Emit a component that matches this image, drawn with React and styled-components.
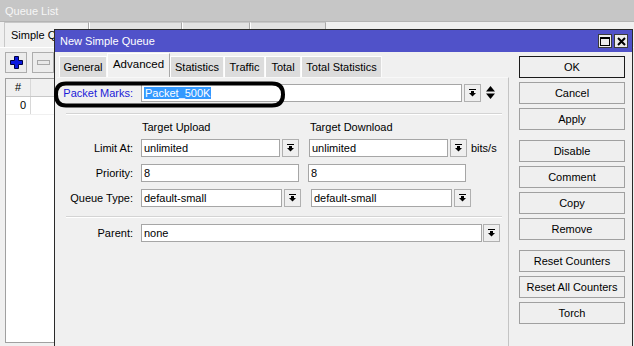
import React from 'react';
import styled, { createGlobalStyle } from 'styled-components';

const Global = createGlobalStyle`
  html, body {
    margin: 0;
    padding: 0;
    background: #f0f0f0;
    overflow: hidden;
  }
  body {
    font-family: "Liberation Sans", Arial, sans-serif;
    font-size: 11px;
    color: #000;
  }
`;

const Desktop = styled.div`
  position: relative;
  width: 634px;
  height: 346px;
  overflow: hidden;
  background: #f0f0f0;
`;

/* ---------- Queue List (window behind) ---------- */

const QueueWindow = styled.div`
  display: flex;
  flex-direction: column;
  height: 346px;
`;

const QLTitle = styled.div`
  height: 22px;
  line-height: 23px;
  padding-left: 5px;
  background: #c6c6c6;
  color: #f6f6f6;
  border-bottom: 1px solid #b4b4b4;
  box-sizing: border-box;
`;

const QLTabs = styled.div`
  display: flex;
  height: 25px;
  padding-left: 4px;
  border-bottom: 1px solid #fff;
`;

const QLTab = styled.div`
  width: ${p => p.$w}px;
  box-sizing: border-box;
  padding: 6px 0 0 6px;
  border-top: 1px solid #c8c8c8;
  border-left: 1px solid ${p => (p.$active ? '#c8c8c8' : '#fff')};
  border-right: 1px solid #a8a8a8;
  background: ${p => (p.$active ? '#f0f0f0' : '#e2e2e2')};
`;

/* only the part left of the dialog is visible */
const QLTabText = styled.div`
  width: 43px;
  white-space: nowrap;
  overflow: hidden;
`;

const QLToolbar = styled.div`
  display: flex;
  gap: 5px;
  padding: 4px 0 0 5px;
  height: 30px;
  box-sizing: border-box;
`;

const ToolBtn = styled.div`
  width: 22px;
  height: 21px;
  box-sizing: border-box;
  border: 1px solid #adadad;
  background: #ececec;
  display: flex;
  align-items: center;
  justify-content: center;
`;

const QLTable = styled.div`
  flex: 1;
  margin: 0 0 3px 5px;
  width: 60px;
  background: #fff;
  border: 1px solid #a0a0a0;
  border-right: none;
`;

const TRow = styled.div`
  display: flex;
  height: 17px;
  border-bottom: 1px solid ${p => (p.$head ? '#c8c8c8' : '#f0f0f0')};
  background: ${p => (p.$head ? '#f0f0f0' : '#fff')};
`;

const TCell = styled.div`
  width: ${p => p.$w}px;
  box-sizing: border-box;
  line-height: 17px;
  text-align: ${p => p.$align || 'left'};
  padding: 0 4px;
  border-right: 1px solid #d8d8d8;
`;

/* ---------- Dialog ---------- */

const Dialog = styled.div`
  position: absolute;
  left: 54px;
  top: 29px;
  width: 579px;
  height: 330px;
  box-sizing: border-box;
  border: 1px solid #2a2a2a;
  background: #f0f0f0;
  display: flex;
  flex-direction: column;
`;

const TitleBar = styled.div`
  height: 22px;
  display: flex;
  align-items: center;
  justify-content: space-between;
  padding: 0 4px 0 5px;
  background: #5052c9;
  color: #fff;
`;

const WinBtns = styled.div`
  display: flex;
  gap: 2px;
`;

const WinBtn = styled.div`
  width: 14px;
  height: 14px;
  box-sizing: border-box;
  border: 1px solid #3a3a3a;
  background: #ececec;
  display: flex;
  align-items: center;
  justify-content: center;
`;

const DlgBody = styled.div`
  flex: 1;
  display: flex;
`;

const TabArea = styled.div`
  display: flex;
  flex-direction: column;
  margin-left: 2px;
  width: 452px;
`;

const TabStrip = styled.div`
  display: flex;
  align-items: flex-end;
  height: 25px;
  padding-left: 2px;
`;

const Tab = styled.div`
  width: ${p => p.$w}px;
  height: ${p => (p.$active ? 24 : 21)}px;
  box-sizing: border-box;
  display: flex;
  align-items: center;
  justify-content: center;
  white-space: nowrap;
  background: ${p => (p.$active ? '#f0f0f0' : '#dcdcdc')};
  border-top: 1px solid #fff;
  border-left: 1px solid #fff;
  border-right: 1px solid ${p => (p.$active ? '#a8a8a8' : '#fafafa')};
  font-size: ${p => (p.$active ? 11.5 : 11)}px;
  padding-bottom: ${p => (p.$active ? 3 : 0)}px;
`;

const Panel = styled.div`
  flex: 1;
  border-right: 1px solid #c4c4c4;
  border-top: 1px solid #f8f8f8;
  padding-top: 6px;
`;

const Row = styled.div`
  display: flex;
  align-items: center;
  height: 18px;
  margin-top: ${p => p.$mt || 0}px;
`;

const Label = styled.div`
  width: 76px;
  margin-right: 8px;
  text-align: right;
  white-space: nowrap;
  color: ${p => (p.$blue ? '#1b1bd8' : '#000')};
`;

const Field = styled.div`
  width: ${p => p.$w}px;
  height: 18px;
  box-sizing: border-box;
  border: 1px solid #a6a6a6;
  background: #fff;
  padding-left: 2px;
  line-height: 16px;
  margin-left: ${p => p.$ml || 0}px;
  white-space: nowrap;
  overflow: hidden;
`;

const Selected = styled.span`
  background: #3399ff;
  color: #fff;
  padding: 0 1px;
`;

const DropBtn = styled.div`
  width: 17px;
  height: 18px;
  box-sizing: border-box;
  border: 1px solid #b0b0b0;
  background: #efefef;
  margin-left: ${p => (p.$ml === undefined ? 2 : p.$ml)}px;
  display: flex;
  align-items: center;
  justify-content: center;
`;

const Unit = styled.span`
  margin-left: 4px;
`;

const Separator = styled.div`
  margin: ${p => p.$mt}px 6px 0 9px;
  border-top: 1px solid #d4d4d4;
  border-bottom: 1px solid #fff;
`;

const HeadRow = styled.div`
  display: flex;
  height: 14px;
  margin-top: 5px;
  line-height: 14px;
  padding-left: 85px;
`;

const HeadCell = styled.div`
  width: ${p => p.$w}px;
`;

const ButtonCol = styled.div`
  display: flex;
  flex-direction: column;
  margin: 4px 0 0 10px;
  width: 106px;
`;

const Button = styled.div`
  height: 22px;
  box-sizing: border-box;
  margin-top: ${p => p.$mt}px;
  border: 1px solid ${p => (p.$default ? '#1a1a1a' : '#a0a0a0')};
  background: #efefef;
  display: flex;
  align-items: center;
  justify-content: center;
  white-space: nowrap;
`;

const Annotation = styled.svg`
  position: absolute;
  left: 0;
  top: 0;
  pointer-events: none;
`;

/* ---------- icons ---------- */

const DropIcon = () => (
  <svg width="7" height="8" viewBox="0 0 7 8">
    <rect x="0" y="0" width="7" height="1" fill="#000" />
    <rect x="2" y="2" width="3" height="2" fill="#000" />
    <polygon points="0,4 7,4 3.5,7.6" fill="#000" />
  </svg>
);

const UpDownIcon = () => (
  <svg width="9" height="14" viewBox="0 0 9 14" style={{ marginLeft: 5 }}>
    <polygon points="4.5,0 9,5.5 0,5.5" fill="#000" />
    <polygon points="0,7.5 9,7.5 4.5,13" fill="#000" />
  </svg>
);

const PlusIcon = () => (
  <svg width="13" height="13" viewBox="0 0 13 13">
    <path d="M4.5 0.5h4v4h4v4h-4v4h-4v-4h-4v-4h4z" fill="#0a18e0" stroke="#000040" strokeWidth="1" />
  </svg>
);

const MinusIcon = () => (
  <svg width="13" height="5" viewBox="0 0 13 5">
    <rect x="0.5" y="0.5" width="12" height="4" fill="#e8e8e8" stroke="#a8a8a8" />
  </svg>
);

const MaxIcon = () => (
  <svg width="10" height="9" viewBox="0 0 10 9">
    <rect x="0.5" y="0.5" width="9" height="8" fill="none" stroke="#000" />
    <rect x="0" y="0" width="10" height="2" fill="#000" />
  </svg>
);

const CloseIcon = () => (
  <svg width="9" height="9" viewBox="0 0 9 9">
    <path d="M1 1L8 8M8 1L1 8" stroke="#000" strokeWidth="2" />
  </svg>
);

const Combo = ({ w, value, ml, btnGap }) => (
  <>
    <Field $w={w} $ml={ml}>{value}</Field>
    <DropBtn $ml={btnGap}><DropIcon /></DropBtn>
  </>
);

const tabs = [
  ['General', 48],
  ['Advanced', 63, true],
  ['Statistics', 54],
  ['Traffic', 41],
  ['Total', 36],
  ['Total Statistics', 81],
];

const buttons = [
  ['OK', 0, true],
  ['Cancel', 4],
  ['Apply', 4],
  ['Disable', 10],
  ['Comment', 4],
  ['Copy', 4],
  ['Remove', 4],
  ['Reset Counters', 10],
  ['Reset All Counters', 4],
  ['Torch', 4],
];

export default function App() {
  return (
    <Desktop>
      <Global />
      <QueueWindow>
        <QLTitle>Queue List</QLTitle>
        <QLTabs>
          <QLTab $w={85} $active><QLTabText>Simple Queues</QLTabText></QLTab>
          <QLTab $w={93} />
          <QLTab $w={68} />
          <QLTab $w={76} />
        </QLTabs>
        <QLToolbar>
          <ToolBtn><PlusIcon /></ToolBtn>
          <ToolBtn><MinusIcon /></ToolBtn>
        </QLToolbar>
        <QLTable>
          <TRow $head>
            <TCell $w={25} $align="center">#</TCell>
            <TCell $w={25} />
          </TRow>
          <TRow>
            <TCell $w={25} $align="right">0</TCell>
            <TCell $w={25} />
          </TRow>
        </QLTable>
      </QueueWindow>

      <Dialog>
        <TitleBar>
          <span>New Simple Queue</span>
          <WinBtns>
            <WinBtn><MaxIcon /></WinBtn>
            <WinBtn><CloseIcon /></WinBtn>
          </WinBtns>
        </TitleBar>
        <DlgBody>
          <TabArea>
            <TabStrip>
              {tabs.map(([name, w, active]) => (
                <Tab key={name} $w={w} $active={active}>{name}</Tab>
              ))}
            </TabStrip>
            <Panel>
              <Row>
                <Label $blue>Packet Marks:</Label>
                <Field $w={321}><Selected>Packet_500K</Selected></Field>
                <DropBtn><DropIcon /></DropBtn>
                <UpDownIcon />
              </Row>

              <Separator $mt={11} />

              <HeadRow>
                <HeadCell $w={168}>Target Upload</HeadCell>
                <HeadCell $w={160}>Target Download</HeadCell>
              </HeadRow>

              <Row $mt={5}>
                <Label>Limit At:</Label>
                <Combo w={139} value="unlimited" />
                <Combo w={139} value="unlimited" ml={10} />
                <Unit>bits/s</Unit>
              </Row>
              <Row $mt={7}>
                <Label>Priority:</Label>
                <Field $w={158}>8</Field>
                <Field $w={158} $ml={9}>8</Field>
              </Row>
              <Row $mt={7}>
                <Label>Queue Type:</Label>
                <Combo w={141} value="default-small" />
                <Combo w={141} value="default-small" ml={10} />
              </Row>

              <Separator $mt={9} />

              <Row $mt={6}>
                <Label>Parent:</Label>
                <Combo w={341} value="none" btnGap={1} />
              </Row>
            </Panel>
          </TabArea>
          <ButtonCol>
            {buttons.map(([name, mt, def]) => (
              <Button key={name} $mt={mt} $default={def}>{name}</Button>
            ))}
          </ButtonCol>
        </DlgBody>
      </Dialog>

      <Annotation width="634" height="346">
        <path
          d="M66 83.5 L272 83.5 Q283 83.5 283 94.5 Q283 105.5 272 105.5 L66 105.5 Q56 105.5 56 94.5 Q56 83.5 66 83.5 Z"
          fill="none"
          stroke="#000"
          strokeWidth="4"
        />
      </Annotation>
    </Desktop>
  );
}
